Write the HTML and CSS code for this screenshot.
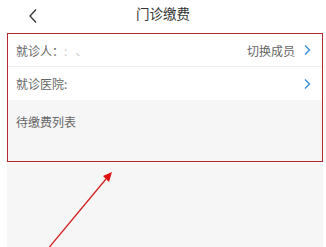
FILE: index.html
```html
<!DOCTYPE html>
<html>
<head>
<meta charset="utf-8">
<link rel="stylesheet" href="styles.css">
</head>
<body>
<div class="page">
  <header class="topbar">
    <span class="back">
      <svg width="10" height="16" viewBox="0 0 10 16"><path d="M8 1.5 L2 8 L8 14.5" fill="none" stroke="#333" stroke-width="1.3"/></svg>
    </span>
    <span class="title">门诊缴费</span>
  </header>
  <main class="content">
    <section class="box">
      <div class="row">
        <span class="label">就诊人：<span class="faint">:</span> &nbsp;&nbsp;<span class="faint">、</span></span>
        <span class="right">切换成员<svg class="chev" width="8" height="12" viewBox="0 0 8 12"><path d="M2 1.5 L6.5 6 L2 10.5" fill="none" stroke="#3a8fdc" stroke-width="1.4"/></svg></span>
      </div>
      <div class="row">
        <span class="label">就诊医院:</span>
        <span class="right"><svg class="chev" width="8" height="12" viewBox="0 0 8 12"><path d="M2 1.5 L6.5 6 L2 10.5" fill="none" stroke="#3a8fdc" stroke-width="1.4"/></svg></span>
      </div>
      <div class="list">待缴费列表</div>
    </section>
  </main>
  <svg class="arrow" width="326" height="247" viewBox="0 0 326 247">
    <line x1="47" y1="250" x2="106" y2="179" stroke="#d42020" stroke-width="1.3"/>
    <polygon points="112,172 103,176 109,182" fill="#e01010"/>
  </svg>
</div>
</body>
</html>
```
FILE: styles.css
```css
html, body {
  margin: 0;
  padding: 0;
  background: #ffffff;
}
.page {
  position: relative;
  width: 326px;
  height: 247px;
  overflow: hidden;
  font-family: "Noto Sans CJK SC", "Noto Sans", sans-serif;
  display: flex;
  flex-direction: column;
}
.topbar {
  height: 33px;
  flex: none;
  display: flex;
  align-items: center;
  justify-content: center;
  position: relative;
  background: #fff;
}
.back {
  position: absolute;
  left: 28px;
  top: 5px;
}
.title {
  font-size: 13.5px;
  color: #333;
  margin-top: -8px;
}
.content {
  flex: 1;
  margin: 0 3px 0 7px;
  background: #f6f6f6;
}
.box {
  border: 1.5px solid #b8262e;
  height: 129px;
  box-sizing: border-box;
  display: flex;
  flex-direction: column;
}
.row {
  height: 32px;
  background: #fff;
  display: flex;
  align-items: center;
  justify-content: space-between;
  padding: 0 11px 0 8px;
  border-bottom: 1px solid #efefef;
  font-size: 12px;
  color: #666;
}
.row + .row {
  height: 33px;
  border-bottom: none;
}
.faint {
  color: #ccc;
}
.right {
  display: flex;
  align-items: center;
  gap: 8px;
  color: #666;
}
.chev {
  display: block;
}
.list {
  flex: 1;
  background: #f6f6f6;
  font-size: 12px;
  color: #666;
  padding: 13px 0 0 8px;
}
.arrow {
  position: absolute;
  left: 0;
  top: 0;
  pointer-events: none;
}
```
